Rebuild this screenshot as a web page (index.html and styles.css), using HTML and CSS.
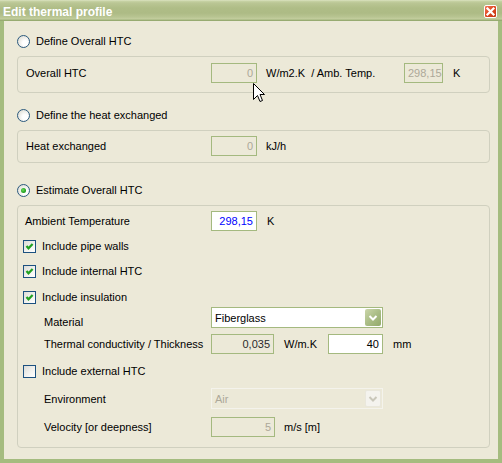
FILE: index.html
```html
<!DOCTYPE html>
<html>
<head>
<meta charset="utf-8">
<title>Edit thermal profile</title>
<link rel="stylesheet" href="styles.css">
</head>
<body>
<div class="window">
  <div class="titlebar">
    <span class="title">Edit thermal profile</span>
    <span class="close"><svg width="11" height="11" viewBox="0 0 11 11"><path d="M2.5 2.5 L8.5 8.5 M8.5 2.5 L2.5 8.5" stroke="#fff" stroke-width="2.2" stroke-linecap="square" fill="none"/></svg></span>
  </div>
  <div class="content">
    <div class="radio-row r1"><span class="radio"></span><span>Define Overall HTC</span></div>
    <div class="group g1">
      <div class="row lrow">
        <span class="lbl">Overall HTC</span>
        <span class="input dis w46">0</span>
        <span class="unit u-amb">W/m2.K&nbsp; / Amb. Temp.</span>
        <span class="input dis w39">298,15</span>
        <span class="unit u10">K</span>
      </div>
    </div>

    <div class="radio-row r2"><span class="radio"></span><span>Define the heat exchanged</span></div>
    <div class="group g2">
      <div class="row lrow">
        <span class="lbl">Heat exchanged</span>
        <span class="input dis w46">0</span>
        <span class="unit">kJ/h</span>
      </div>
    </div>

    <div class="radio-row r3"><span class="radio checked"></span><span>Estimate Overall HTC</span></div>
    <div class="group g3">
      <div class="row arow">
        <span class="lbl lbl-a">Ambient Temperature</span>
        <span class="input blue w46">298,15</span>
        <span class="unit u10">K</span>
      </div>
      <div class="row crow m5">
        <span class="cb"><svg width="11" height="11" viewBox="0 0 11 11"><path d="M2.5 5 L4.5 7.3 L8.6 3" stroke="#21a121" stroke-width="2.2" fill="none"/></svg></span>
        <span>Include pipe walls</span>
      </div>
      <div class="row crow m5">
        <span class="cb"><svg width="11" height="11" viewBox="0 0 11 11"><path d="M2.5 5 L4.5 7.3 L8.6 3" stroke="#21a121" stroke-width="2.2" fill="none"/></svg></span>
        <span>Include internal HTC</span>
      </div>
      <div class="row crow m6">
        <span class="cb"><svg width="11" height="11" viewBox="0 0 11 11"><path d="M2.5 5 L4.5 7.3 L8.6 3" stroke="#21a121" stroke-width="2.2" fill="none"/></svg></span>
        <span>Include insulation</span>
      </div>
      <div class="row irow tall">
        <span class="lbl-i lbl-low">Material</span>
        <div class="select">
          <span>Fiberglass</span>
          <span class="sel-btn"><svg width="16" height="17" viewBox="0 0 16 17"><path d="M4.5 7 L8 10.5 L11.5 7" stroke="#fff" stroke-width="2" fill="none"/></svg></span>
        </div>
      </div>
      <div class="row irow m6">
        <span class="lbl-i">Thermal conductivity / Thickness</span>
        <span class="input ro w63">0,035</span>
        <span class="unit u-wm">W/m.K</span>
        <span class="input w55">40</span>
        <span class="unit u10">mm</span>
      </div>
      <div class="row crow m7">
        <span class="cb"></span>
        <span>Include external HTC</span>
      </div>
      <div class="row irow tall m7">
        <span class="lbl-i">Environment</span>
        <div class="select sel-dis">
          <span>Air</span>
          <span class="sel-btn"><svg width="16" height="17" viewBox="0 0 16 17"><path d="M4.5 7 L8 10.5 L11.5 7" stroke="#c9c7ba" stroke-width="2" fill="none"/></svg></span>
        </div>
      </div>
      <div class="row irow m8">
        <span class="lbl-i">Velocity [or deepness]</span>
        <span class="input dis w64">5</span>
        <span class="unit">m/s [m]</span>
      </div>
    </div>
  </div>
  <svg class="cursor" width="13" height="20" viewBox="0 0 13 20"><path d="M0.5 0.5 V16.5 L4.5 12.5 L7 18.5 L9.5 17.5 L7 11.5 H11.5 Z" fill="#fff" stroke="#000" stroke-width="1"/></svg>
</div>
</body>
</html>
```

FILE: styles.css
```css
html, body {
  margin: 0;
  padding: 0;
  background: #ece9d8;
}
body {
  font-family: "Liberation Sans", Arial, sans-serif;
  font-size: 11px;
  color: #000;
}
.window {
  position: relative;
  width: 502px;
  height: 463px;
  display: flex;
  flex-direction: column;
  background: #ece9d8;
  overflow: hidden;
}
.titlebar {
  height: 21px;
  flex: 0 0 21px;
  display: flex;
  align-items: center;
  justify-content: space-between;
  padding: 0 5px 0 3px;
  background: linear-gradient(to bottom,
    #dfe6c6 0px, #c8d3a6 1px, #bac694 3px, #afbd87 8px, #adbb85 13px,
    #b8c592 17px, #c3ce9f 19px, #a0b27a 20px, #8ea468 21px);
}
.title {
  color: #fff;
  font-weight: bold;
  font-size: 12px;
  padding-top: 2px;
}
.close {
  width: 13px;
  height: 13px;
  box-sizing: border-box;
  margin-top: 1px;
  border: 1px solid #fff;
  border-radius: 2px;
  background: linear-gradient(135deg, #f07a5a 0%, #e04a24 45%, #c23410 100%);
  display: flex;
  align-items: center;
  justify-content: center;
}
.close svg { display: block; }
.content {
  flex: 1;
  border: 4px solid #a5bc7f;
  border-top: none;
  padding: 0 8px 0 13px;
}
.radio-row {
  display: flex;
  align-items: center;
  height: 13px;
  line-height: 13px;
  gap: 6px;
}
.r1 { margin-top: 14px; }
.r2 { margin-top: 16px; }
.r3 { margin-top: 21px; }
.radio {
  width: 13px;
  height: 13px;
  box-sizing: border-box;
  border-radius: 50%;
  border: 1px solid #2b5a7e;
  background: radial-gradient(circle at 65% 65%, #ffffff 25%, #e6e5de 70%, #d2d1c8 100%);
  position: relative;
}
.radio.checked::after {
  content: "";
  position: absolute;
  left: 3px;
  top: 3px;
  width: 5px;
  height: 5px;
  border-radius: 50%;
  background: radial-gradient(circle at 40% 40%, #6fdc5a 0%, #21a121 60%, #1b8a1b 100%);
}
.group {
  border: 1px solid #d0d0bf;
  border-radius: 4px;
  margin-top: 8px;
}
.g1 { padding: 6px 0 9px; }
.g2 { padding: 5px 0 6px; }
.g3 { padding: 5px 0 10px; }
.row {
  display: flex;
  align-items: center;
  height: 20px;
}
.row.tall { height: 21px; }
.lrow { padding-left: 8px; }
.arow { padding-left: 7px; }
.crow { padding-left: 5px; gap: 6px; }
.irow { padding-left: 26px; }
.m5 { margin-top: 5px; }
.m6 { margin-top: 6px; }
.m7 { margin-top: 7px; }
.m8 { margin-top: 8px; }
.lbl { width: 185px; flex: 0 0 185px; }
.lbl-a { width: 186px; flex: 0 0 186px; }
.lbl-i { width: 167px; flex: 0 0 167px; white-space: nowrap; }
.lbl-low { margin-top: 8px; }
.input {
  box-sizing: border-box;
  height: 20px;
  line-height: 18px;
  border: 1px solid #a4b97f;
  padding: 0 3px;
  text-align: right;
  background: #fff;
  white-space: nowrap;
}
.input.dis {
  background: #ece9d8;
  color: #aca899;
}
.input.ro {
  background: #ece9d8;
  color: #2a2a2a;
}
.input.blue { color: #0000ff; }
.w39 { width: 39px; }
.w46 { width: 46px; }
.w55 { width: 55px; }
.w63 { width: 63px; }
.w64 { width: 64px; }
.unit {
  margin-left: 9px;
  white-space: nowrap;
}
.u10 { margin-left: 10px; }
.u-amb { width: 138px; flex: 0 0 138px; }
.u-wm { margin-left: 10px; width: 44px; flex: 0 0 44px; }
.cb {
  width: 13px;
  height: 13px;
  flex: 0 0 13px;
  box-sizing: border-box;
  border: 1px solid #1c5180;
  background: linear-gradient(135deg, #dcdcd7 0%, #f4f4f1 60%, #ffffff 100%);
}
.cb svg { display: block; }
.select {
  box-sizing: border-box;
  width: 172px;
  height: 21px;
  border: 1px solid #a4b97f;
  background: #fff;
  padding-left: 3px;
  display: flex;
  align-items: center;
  justify-content: space-between;
}
.sel-btn {
  width: 16px;
  height: 17px;
  margin-right: 1px;
  box-sizing: border-box;
  border-radius: 2px;
  background: linear-gradient(135deg, #cbd6aa 0%, #aabd86 50%, #93a96a 100%);
}
.sel-btn svg { display: block; }
.sel-dis {
  border-color: #f4f3ec;
  background: #ece9d8;
  color: #aca899;
}
.sel-dis .sel-btn {
  background: #f4f3ee;
  border: 1px solid #e9e7dc;
}
.sel-dis .sel-btn svg { margin: -1px; }
.cursor {
  position: absolute;
  left: 253px;
  top: 83px;
}
```
